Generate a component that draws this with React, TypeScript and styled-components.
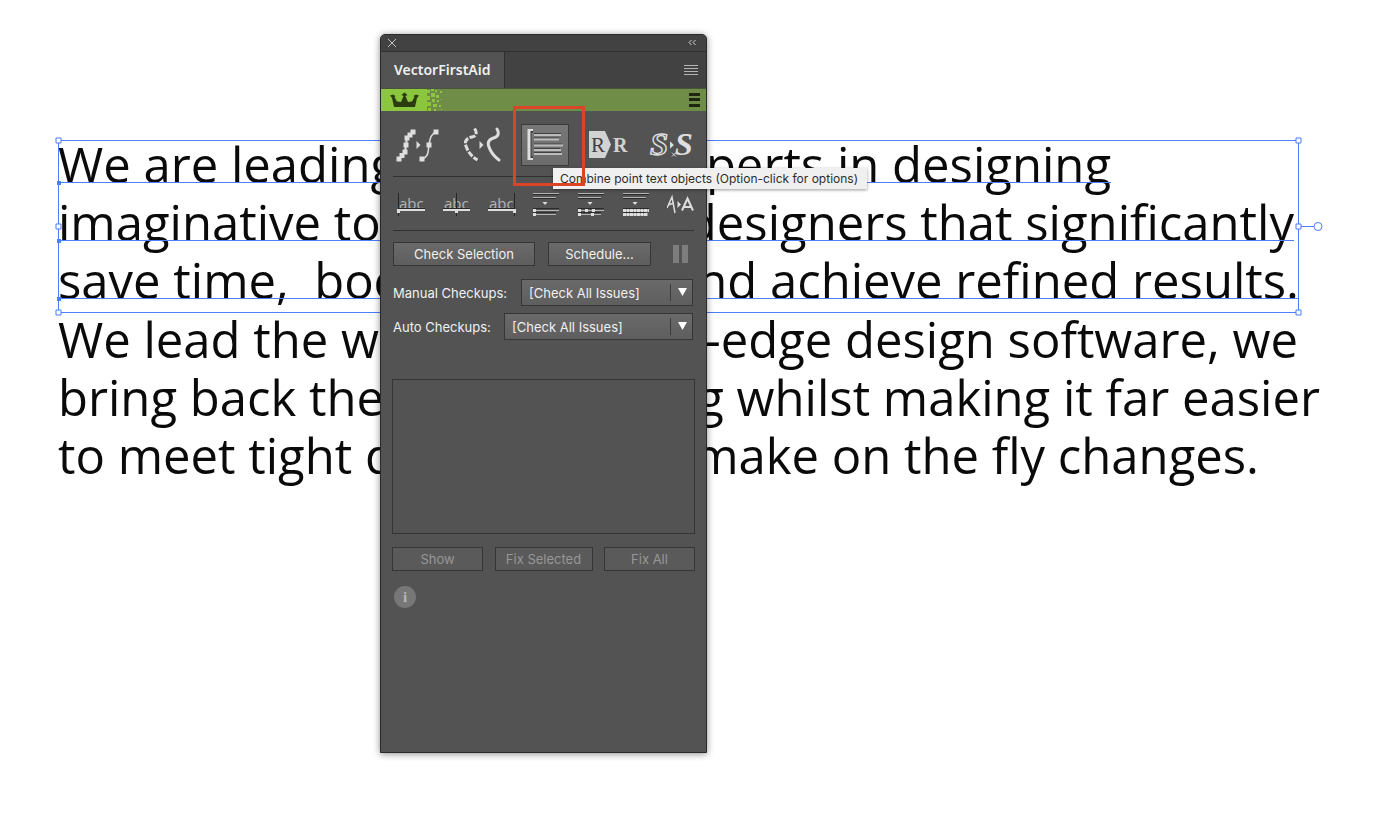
import React from "react";
import styled, { createGlobalStyle } from "styled-components";

const Global = createGlobalStyle`
  *, *::before, *::after { box-sizing: border-box; }
  body { margin: 0; background: #fff; overflow-x: hidden; }
  button, select { font: inherit; color: inherit; margin: 0; }
`;

const Canvas = styled.main`
  position: relative;
  min-height: 100vh;
  padding: 135px 79px 80px 58px;
  overflow: hidden;
  font-family: "Open Sans", "Noto Sans", sans-serif;
`;
const Story = styled.div`
  display: flex;
  flex-direction: column;
  gap: 1px;
`;
const Passage = styled.p`
  position: relative;
  margin: 0;
  color: #0a0a0a;
  font-size: 49px;
  line-height: 58px;
  white-space: pre;
`;
const Line = styled.span<{ $width: number }>`
  display: flex;
  justify-content: space-between;
  width: ${(p) => p.$width}px;
`;
const Selection = styled.svg`
  position: absolute;
  left: -4px;
  top: 1px;
  pointer-events: none;
`;

const Panel = styled.section`
  position: absolute;
  left: 380px;
  top: 34px;
  width: 327px;
  min-height: 719px;
  border: 1px solid #2a2a2a;
  border-radius: 5px 5px 0 0;
  background: #535353;
  box-shadow: 0 1px 7px rgba(0, 0, 0, 0.45);
  color: #f0f0f0;
  font-family: Inter, "Liberation Sans", sans-serif;
  font-size: 13px;
  line-height: 16px;
`;
const TitleBar = styled.header`
  display: flex;
  justify-content: space-between;
  align-items: center;
  height: 17px;
  padding: 0 8px 0 5px;
  border-bottom: 1px solid #303030;
  border-radius: 4px 4px 0 0;
  background: #424242;
`;
const IconButton = styled.button`
  display: flex;
  align-items: center;
  justify-content: center;
  padding: 0;
  border: 0;
  background: none;
`;
const TabBar = styled.div`
  display: flex;
  justify-content: space-between;
  align-items: stretch;
  height: 36px;
  padding-right: 8px;
  background: #424242;
`;
const Tab = styled.button`
  padding: 0 14px 0 13px;
  border: 0;
  border-right: 1px solid #303030;
  background: #535353;
  && {
    font-family: "Noto Sans", sans-serif;
    font-size: 14px;
    font-weight: 600;
  }
`;
const Brand = styled.div`
  display: flex;
  justify-content: space-between;
  align-items: center;
  height: 23px;
  padding-right: 6px;
  border-top: 1px solid #49553a;
  background: #6f8d47;
`;
const Body = styled.div`
  padding: 13px 12px;
`;
const Tools = styled.div`
  display: flex;
  gap: 15px;
  height: 53px;
  padding-left: 2px;
  border-bottom: 1px solid #303030;
`;
const Tool = styled.button<{ $active?: boolean }>`
  display: flex;
  flex: none;
  align-items: center;
  justify-content: center;
  width: 48px;
  height: 42px;
  padding: 0;
  border: 1px solid ${(p) => (p.$active ? "#3b3b3b" : "transparent")};
  background: ${(p) => (p.$active ? "linear-gradient(#777, #6c6c6c)" : "none")};
`;
const AlignTools = styled(Tools)`
  height: 54px;
  padding: 12px 0 0 4px;
`;
const AlignTool = styled(Tool)`
  width: 30px;
  height: 28px;
  border: 0;
`;
const Actions = styled.div`
  display: flex;
  align-items: center;
  padding: 11px 5px 0 0;
  gap: 13px;
`;
const Push = styled.button<{ $width: number }>`
  width: ${(p) => p.$width}px;
  height: 24px;
  padding: 0;
  border: 1px solid #363636;
  background: linear-gradient(#6a6a6a, #5e5e5e);
  &:disabled {
    color: #979797;
    background: #5a5a5a;
  }
`;
const Pause = styled(IconButton)`
  margin-left: auto;
`;
const Field = styled.label`
  display: flex;
  align-items: center;
  justify-content: space-between;
  height: 27px;
  margin: 0 1px 7px 0;
`;
const Fields = styled.div`
  padding-top: 13px;
`;
const Picker = styled.span<{ $width: number }>`
  position: relative;
  width: ${(p) => p.$width}px;
`;
const Select = styled.select`
  appearance: none;
  display: block;
  width: 100%;
  height: 27px;
  padding: 0 28px 0 7px;
  border: 1px solid #363636;
  border-radius: 0;
  background: linear-gradient(#6a6a6a, #5e5e5e);
`;
const Caret = styled.svg`
  position: absolute;
  right: 1px;
  top: 5px;
  pointer-events: none;
`;
const Issues = styled.div`
  height: 155px;
  margin: 39px -1px 0;
  border: 1px solid #343434;
`;
const Footer = styled.div`
  display: flex;
  justify-content: space-between;
  margin: 0 -1px;
  padding: 13px 0 14px;
`;
const Tip = styled.div`
  position: absolute;
  left: 553px;
  top: 168px;
  padding: 0 9px 0 7px;
  background: #f0f0f0;
  box-shadow: 0 1px 3px rgba(0, 0, 0, 0.4);
  color: #2c2c2c;
  font-family: Inter, sans-serif;
  font-size: 12px;
  line-height: 21px;
  white-space: nowrap;
`;
const Highlight = styled.div`
  position: absolute;
  left: 513px;
  top: 106px;
  width: 72px;
  height: 80px;
  border: 3px solid #dc4427;
  pointer-events: none;
`;

const selected: [number, string, string][] = [
  [1053, "We are leading", "experts in designing"],
  [1236, "imaginative tools", "designers that significantly"],
  [1241, "save time,  boost", "and achieve refined results."],
];
const rest: [number, string, string][] = [
  [1240, "We lead the way", "-edge design software, we"],
  [1262, "bring back the", "ng whilst making it far easier"],
  [1201, "to meet tight d", "make on the fly changes."],
];

const Lines = ({ rows }: { rows: [number, string, string][] }) => (
  <>
    {rows.map(([width, start, end]) => (
      <Line key={start} $width={width}>
        <span>{start}</span>
        <span>{end}</span>
      </Line>
    ))}
  </>
);

const SelectionMarks = () => (
  <Selection width="1270" height="182" viewBox="0 0 1270 182" fill="none" stroke="#4f7cf7" aria-hidden="true">
    <path d="M4.500 4.500H1244.500V176.500H4.500ZM4 46.500H1057M4 104.500H1240M4 162.500H1244M1245 90.500H1260" />
    <g fill="#fff">
      <path d="M2 2h5v5h-5zM1242 2h5v5h-5zM2 88h5v5h-5zM1242 88h5v5h-5zM2 174h5v5h-5zM1242 174h5v5h-5z" />
      <circle cx="1264" cy="90.500" r="4" />
    </g>
    <path fill="#4f7cf7" stroke="none" d="M3 45h4v4h-4zM3 103h4v4h-4zM3 161h4v4h-4z" />
  </Selection>
);

const Crown = () => (
  <svg width="68" height="22" viewBox="0 0 68 22" aria-label="Astute Graphics">
    <path fill="#8cc63f" d="M0 0H46V22H0Z" />
    <path
      fill="#8cc63f"
      d="M46 1h3v3h-3zM50 0h3v2h-3zM54 1h2v2h-2zM50 4h4v4h-4zM46 7h3v4h-3zM55 6h3v3h-3zM59 2h2v2h-2zM51 10h3v3h-3zM46 13h4v4h-4zM56 11h2v2h-2zM52 15h4v3h-4zM58 16h2v2h-2zM47 19h3v3h-3zM53 20h2v2h-2zM60 10h1v1h-1zM60 20h1v1h-1z"
    />
    <path
      fill="#2b3c10"
      d="M13 18 11 9 9 6.500l3-1 2.500 1.500-1 1 2.500 4.500 4 .500 2.500-6L20.500 6 23.500 3.500l3 2.500-2 1 2.500 6 4-.500 2.500-4.500-1-1 2.500-1.500 3 1-2 2.500-2 9Z"
    />
  </svg>
);

const Squares = ({ at }: { at: [number, number][] }) => (
  <>
    {at.map(([x, y]) => (
      <rect key={`${x}-${y}`} x={x - 2} y={y - 2} width="4" height="4" fill="#dedede" />
    ))}
  </>
);

const SmoothIcon = () => (
  <svg width="46" height="38" viewBox="0 0 46 38" fill="none" stroke="#dedede">
    <path d="M3 33 6 30 9 26 10 19 11 12 14 9 17 6" strokeWidth="2" />
    <Squares at={[[3, 33], [6, 29.5], [9, 26], [10, 19], [11, 12], [14, 9], [17, 6]]} />
    <path d="M20.500 15v8l4-4z" fill="#dedede" stroke="none" />
    <path d="M26 33C33 31 32 25 33 19 34 12 35 8 40 6" strokeWidth="1.500" />
    <Squares at={[[26, 33], [33, 19], [40, 6]]} />
  </svg>
);

const JoinIcon = () => (
  <svg width="46" height="38" viewBox="0 0 46 38" fill="none" stroke="#dedede" strokeWidth="3">
    <path strokeDasharray="6 1.500" d="M15.500 2.500C18 6 18 10 13 11 8 12 5 15 7 20 9 26 13 31 18.500 34" />
    <path d="M20.500 15v8l4-4z" fill="#dedede" stroke="none" />
    <path strokeLinecap="round" d="M38 3C40 6 40 10 36 11.500 30 13 28 16 30 21 32 27 36 31 40 34" />
  </svg>
);

const CombineIcon = () => (
  <svg width="40" height="32" viewBox="0 0 40 32" fill="none">
    <path d="M8 2.500H5.500V28.500H8" stroke="#3a3a3a" strokeWidth="2" />
    <path d="M8 1H4V30H8" stroke="#dedede" strokeWidth="2" />
    <path d="M4 0V31" stroke="#dedede" strokeWidth="3" />
    <path d="M9 4.500H36M9 9H34M9 15H37M9 19.500H35M9 23.500H36" stroke="#3f3f3f" />
    <path d="M9 6H36M9 10.500H34M9 16.500H38M9 21H36M9 25H37" stroke="#bdbdbd" strokeWidth="2" />
  </svg>
);

const RetypeIcon = () => (
  <svg width="42" height="32" viewBox="0 0 42 32" fontFamily="Liberation Serif">
    <path fill="#d2d2d2" d="M2 2H18L24 15.500 18 29H2Z" />
    <text x="4" y="23" fontSize="21" fill="#3f3f3f">R</text>
    <text x="26" y="23" fontSize="20" fontWeight="700" fill="#d2d2d2">R</text>
  </svg>
);

const StyleIcon = () => (
  <svg width="48" height="38" viewBox="0 0 48 38" fontFamily="Liberation Serif" fontStyle="italic" fontWeight="700" fontSize="34">
    <text x="2" y="29" fill="#535353" stroke="#dedede" strokeWidth="1.500">S</text>
    <path fill="#dedede" d="M23 15v8l4-4z" />
    <path stroke="#dedede" d="m25 27 4 4m0-4-4 4" />
    <text x="28" y="29" fill="#dedede">S</text>
  </svg>
);

const AbcIcon = ({ anchor }: { anchor: number }) => (
  <svg width="30" height="28" viewBox="0 0 30 28" fontFamily="Open Sans" fontSize="15">
    <text x="2" y="20" fill="#b4b4b4">abc</text>
    <path stroke="#262626" d={`M${anchor + 0.5} 4v23M1 19.500h27`} />
    <path fill="#dedede" d={`M1 20h27v2h-27zM${anchor - 1} 20h3v4h-3z`} />
  </svg>
);

const SpacingIcon = ({ kind }: { kind: "line" | "points" | "dense" }) => (
  <svg width="30" height="28" viewBox="0 0 30 28" fill="none">
    <path d="M1 5.500H27M1 9.500H24M1 19.500H27M1 23.500H24" stroke="#2b2b2b" />
    <path d="M1 4.500H27M1 8.500H24M1 21.500H27M1 25.500H24" stroke="#b4b4b4" />
    <path d="M10.500 13h5l-2.500 3z" fill="#dedede" />
    <path d="M1 20h3v3h-3zM1 24h3v3h-3z" fill="#dedede" />
    {kind === "points" && <path d="M8 20h3v3h-3zM15 20h3v3h-3zM14 24h3v3h-3z" fill="#dedede" />}
    {kind === "dense" && <path d="M1 21.500H27M1 25.500H26" strokeWidth="3" strokeDasharray="3 .500" stroke="#dedede" />}
  </svg>
);

const ReshapeIcon = () => (
  <svg width="30" height="28" viewBox="0 0 30 28" fill="none" stroke="#dedede">
    <path d="M0 19 5 8 8 24M1 16 7 14" strokeWidth="1.500" />
    <path d="M10.500 12v7l3.500-3.500z" fill="#dedede" stroke="none" />
    <path d="m15 21.500 5.500-12 5.500 12M17 18h7" strokeWidth="2" />
  </svg>
);

const PickerField = ({ label, width }: { label: string; width: number }) => (
  <Field>
    {label}
    <Picker $width={width}>
      <Select>
        <option>[Check All Issues]</option>
      </Select>
      <Caret width="22" height="17" viewBox="0 0 22 17" aria-hidden="true">
        <path d="M.500 0v17" stroke="#3c3c3c" />
        <path d="M8 4h9l-4.500 8z" fill="#fff" />
      </Caret>
    </Picker>
  </Field>
);

export default function App() {
  return (
    <Canvas>
      <Global />
      <Story>
        <Passage>
          <Lines rows={selected} />
          <SelectionMarks />
        </Passage>
        <Passage>
          <Lines rows={rest} />
        </Passage>
      </Story>

      <Panel aria-label="VectorFirstAid">
        <TitleBar>
          <IconButton aria-label="Close">
            <svg width="12" height="12" viewBox="0 0 12 12" stroke="#c4c4c4"><path d="m2 2 8 8m0-8-8 8" /></svg>
          </IconButton>
          <IconButton aria-label="Collapse">
            <svg width="12" height="10" viewBox="0 0 12 10" fill="none" stroke="#d4d4d4"><path d="M5.500 2 3 4.500 5.500 7M9.500 2 7 4.500 9.500 7" /></svg>
          </IconButton>
        </TitleBar>
        <TabBar>
          <Tab>VectorFirstAid</Tab>
          <IconButton aria-label="Panel menu">
            <svg width="14" height="12" viewBox="0 0 14 12" stroke="#b4b4b4"><path d="M0 1.500h14M0 4.500h14M0 7.500h14M0 10.500h14" /></svg>
          </IconButton>
        </TabBar>
        <Brand>
          <Crown />
          <IconButton aria-label="Menu">
            <svg width="11" height="14" viewBox="0 0 11 14" fill="#1e260f"><path d="M0 0h11v3h-11zM0 5h11v3h-11zM0 11h11v3h-11z" /></svg>
          </IconButton>
        </Brand>
        <Body>
          <Tools>
            <Tool aria-label="Smooth"><SmoothIcon /></Tool>
            <Tool aria-label="Join"><JoinIcon /></Tool>
            <Tool $active aria-label="Combine point text"><CombineIcon /></Tool>
            <Tool aria-label="Retype"><RetypeIcon /></Tool>
            <Tool aria-label="Style"><StyleIcon /></Tool>
          </Tools>
          <AlignTools>
            <AlignTool aria-label="Align left"><AbcIcon anchor={1} /></AlignTool>
            <AlignTool aria-label="Align centre"><AbcIcon anchor={14} /></AlignTool>
            <AlignTool aria-label="Align right"><AbcIcon anchor={27} /></AlignTool>
            <AlignTool aria-label="Lines"><SpacingIcon kind="line" /></AlignTool>
            <AlignTool aria-label="Points"><SpacingIcon kind="points" /></AlignTool>
            <AlignTool aria-label="Dense"><SpacingIcon kind="dense" /></AlignTool>
            <AlignTool aria-label="Reshape"><ReshapeIcon /></AlignTool>
          </AlignTools>
          <Actions>
            <Push $width={142}>Check Selection</Push>
            <Push $width={103}>Schedule...</Push>
            <Pause aria-label="Pause">
              <svg width="17" height="18" viewBox="0 0 17 18" fill="#7d7d7d"><path d="M1 0h6v18h-6zM10 0h6v18h-6z" /></svg>
            </Pause>
          </Actions>
          <Fields>
            <PickerField label="Manual Checkups:" width={172} />
            <PickerField label="Auto Checkups:" width={189} />
          </Fields>
          <Issues />
          <Footer>
            <Push disabled $width={91}>Show</Push>
            <Push disabled $width={98}>Fix Selected</Push>
            <Push disabled $width={91}>Fix All</Push>
          </Footer>
          <IconButton aria-label="Information">
            <svg width="24" height="24" viewBox="0 0 24 24">
              <circle cx="12" cy="12" r="11" fill="#777" />
              <text x="12" y="17" textAnchor="middle" fontFamily="Liberation Serif" fontWeight="700" fontSize="15" fill="#b5b5b5">i</text>
            </svg>
          </IconButton>
        </Body>
      </Panel>
      <Tip role="tooltip">Combine point text objects (Option-click for options)</Tip>
      <Highlight />
    </Canvas>
  );
}
